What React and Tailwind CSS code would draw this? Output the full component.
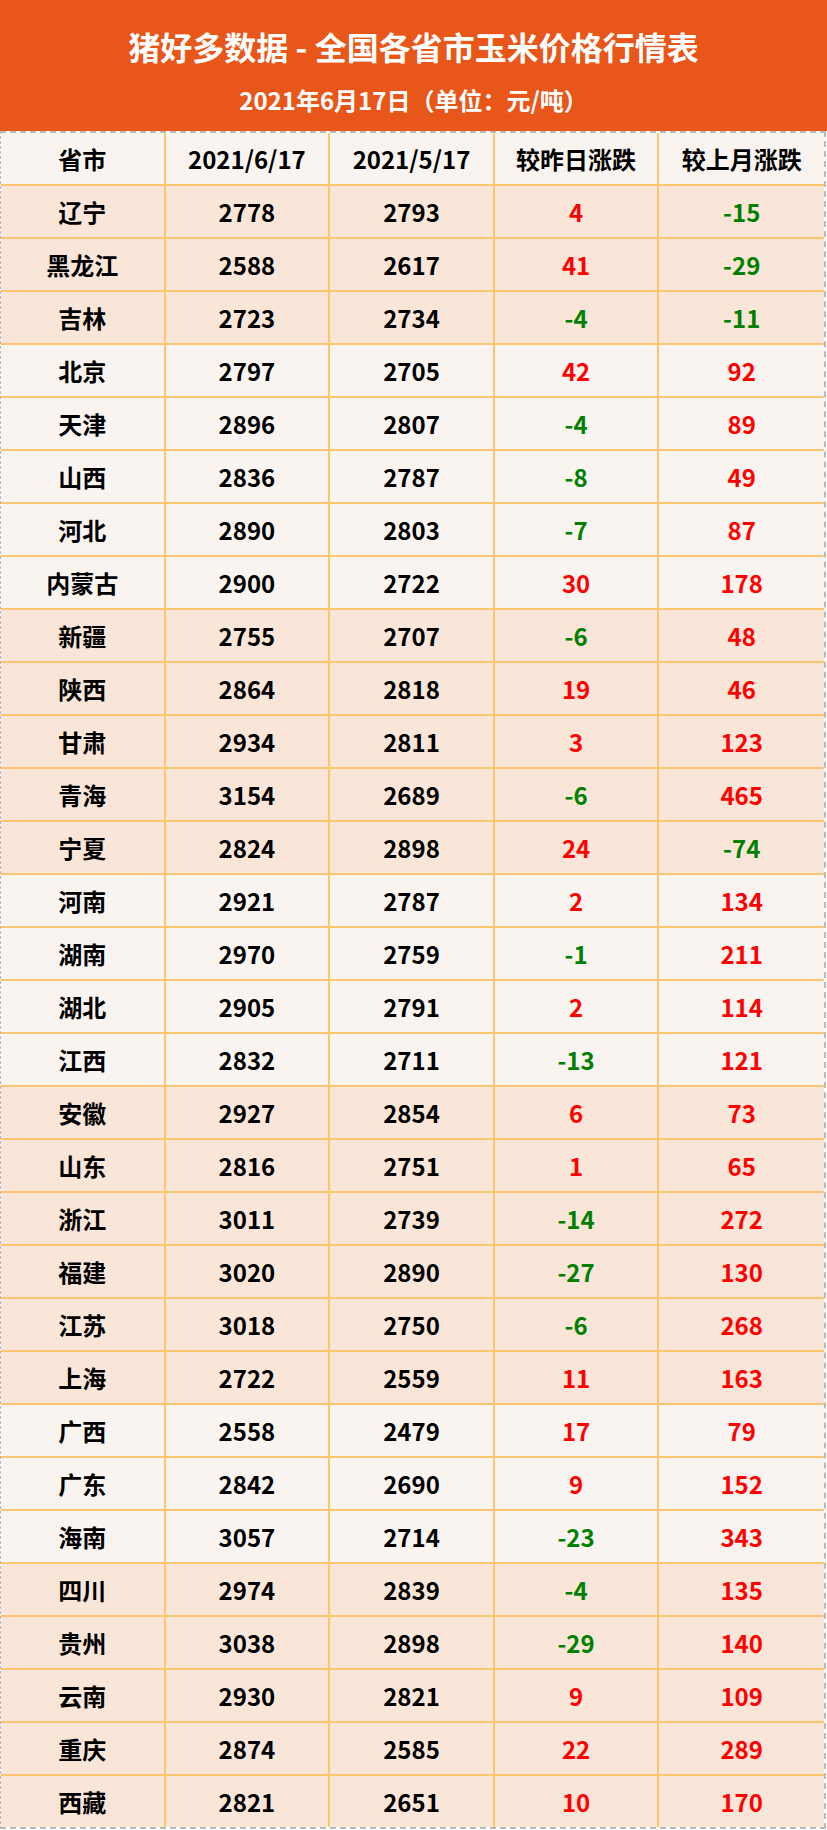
import React from 'react';

const rows = [
  ['辽宁', 2778, 2793, 4, -15, 'a'],
  ['黑龙江', 2588, 2617, 41, -29, 'a'],
  ['吉林', 2723, 2734, -4, -11, 'a'],
  ['北京', 2797, 2705, 42, 92, 'b'],
  ['天津', 2896, 2807, -4, 89, 'b'],
  ['山西', 2836, 2787, -8, 49, 'b'],
  ['河北', 2890, 2803, -7, 87, 'b'],
  ['内蒙古', 2900, 2722, 30, 178, 'b'],
  ['新疆', 2755, 2707, -6, 48, 'a'],
  ['陕西', 2864, 2818, 19, 46, 'a'],
  ['甘肃', 2934, 2811, 3, 123, 'a'],
  ['青海', 3154, 2689, -6, 465, 'a'],
  ['宁夏', 2824, 2898, 24, -74, 'a'],
  ['河南', 2921, 2787, 2, 134, 'b'],
  ['湖南', 2970, 2759, -1, 211, 'b'],
  ['湖北', 2905, 2791, 2, 114, 'b'],
  ['江西', 2832, 2711, -13, 121, 'b'],
  ['安徽', 2927, 2854, 6, 73, 'a'],
  ['山东', 2816, 2751, 1, 65, 'a'],
  ['浙江', 3011, 2739, -14, 272, 'a'],
  ['福建', 3020, 2890, -27, 130, 'a'],
  ['江苏', 3018, 2750, -6, 268, 'a'],
  ['上海', 2722, 2559, 11, 163, 'a'],
  ['广西', 2558, 2479, 17, 79, 'b'],
  ['广东', 2842, 2690, 9, 152, 'b'],
  ['海南', 3057, 2714, -23, 343, 'b'],
  ['四川', 2974, 2839, -4, 135, 'a'],
  ['贵州', 3038, 2898, -29, 140, 'a'],
  ['云南', 2930, 2821, 9, 109, 'a'],
  ['重庆', 2874, 2585, 22, 289, 'a'],
  ['西藏', 2821, 2651, 10, 170, 'a'],
];

const headers = ['省市', '2021/6/17', '2021/5/17', '较昨日涨跌', '较上月涨跌'];

function Cell({ children, last, className = '' }) {
  return (
    <div
      className={`flex items-center justify-center ${last ? '' : 'border-r-2 border-[#fcc572]'} ${className}`}
    >
      {children}
    </div>
  );
}

function Change({ value, last }) {
  return (
    <Cell last={last} className={value < 0 ? 'text-[#008000]' : 'text-[#ff0000]'}>
      {value}
    </Cell>
  );
}

export default function App() {
  return (
    <main
      className="w-[827px] bg-white"
      style={{ fontFamily: '"Noto Sans CJK SC", "Noto Sans", sans-serif' }}
    >
      <header className="h-[131px] bg-[#e9561a] text-white font-bold flex flex-col items-center pt-[29px]">
        <h1 className="text-[32px] leading-[34px]">猪好多数据 - 全国各省市玉米价格行情表</h1>
        <p className="text-[24px] leading-[24px] mt-[25px]">2021年6月17日（单位：元/吨）</p>
      </header>

      <section className="w-[826px] border-t-2 border-l border-r-2 border-b-2 border-dashed border-[#b9b9b9] text-[24px] font-bold text-black">
        <div className="grid grid-cols-5 h-[53px] bg-[#f9f4f0] border-b-2 border-[#fcc572]">
          {headers.map((h, i) => (
            <Cell key={h} last={i === 4}>
              {h}
            </Cell>
          ))}
        </div>

        {rows.map(([name, cur, prev, day, month, tone], i) => (
          <div
            key={name}
            className={`grid grid-cols-5 ${i === rows.length - 1 ? 'h-[51px]' : 'h-[53px] border-b-2 border-[#fcc572]'} ${
              tone === 'a' ? 'bg-[#fae5d9]' : 'bg-[#f9f4f0]'
            }`}
          >
            <Cell>{name}</Cell>
            <Cell>{cur}</Cell>
            <Cell>{prev}</Cell>
            <Change value={day} />
            <Change value={month} last />
          </div>
        ))}
      </section>
    </main>
  );
}
